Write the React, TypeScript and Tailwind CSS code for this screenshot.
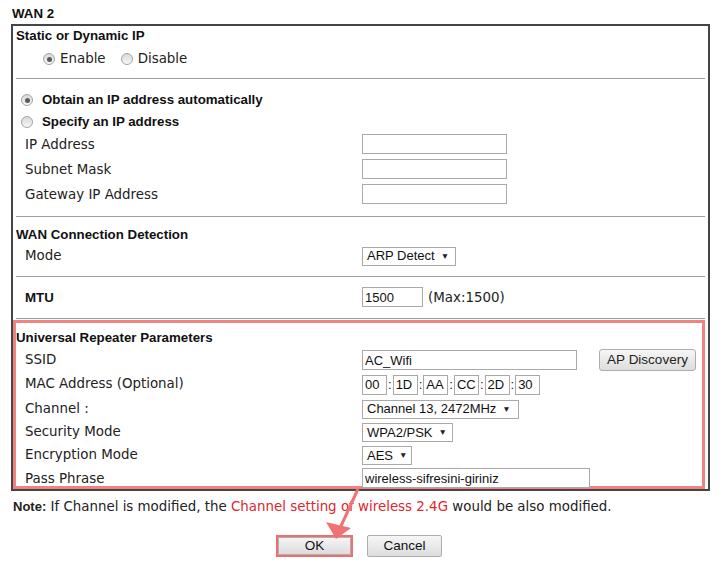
import React from 'react';

const LABEL = "font-['DejaVu_Sans',sans-serif] text-[13.4px] text-[#222]";
const HEAD = "font-['Liberation_Sans',Arial,sans-serif] font-bold text-[13.3px] text-[#111]";
const FIELD = "font-['Liberation_Sans',Arial,sans-serif] text-[13px] text-[#111]";

const Radio: React.FC<{ checked?: boolean }> = ({ checked }) => (
  <span className="inline-flex h-[12px] w-[12px] items-center justify-center rounded-full border border-[#a3a3a3] bg-gradient-to-b from-[#d8d8d8] to-[#f8f8f8]">
    {checked && <span className="h-[5px] w-[5px] rounded-full bg-[#5a5a5a]"></span>}
  </span>
);

const TextBox: React.FC<{ w: string; value?: string }> = ({ w, value }) => (
  <input
    readOnly
    value={value ?? ''}
    className={`${w} block h-[20px] border border-[#a9a9a9] bg-white px-[2px] outline-none ${FIELD}`}
  />
);

const Select: React.FC<{ w: string; value: string }> = ({ w, value }) => (
  <div className={`${w} flex h-[19px] items-center gap-[6px] border border-[#a9a9a9] bg-white pl-[4px] ${FIELD}`}>
    <span>{value}</span>
    <span className="text-[8.5px] text-[#222]">▼</span>
  </div>
);

const Sep = () => <div className="mx-[3px] h-px bg-[#a0a0a0]"></div>;

const Row: React.FC<{ h: string; pt?: string; label: React.ReactNode; children?: React.ReactNode }> = ({ h, pt = 'pt-[4px]', label, children }) => (
  <div className={`flex ${h} items-center`}>
    <div className={`w-[349px] pl-[12px] ${pt} ${LABEL}`}>{label}</div>
    <div className="flex items-center">{children}</div>
  </div>
);

const RepRow: React.FC<{ h: string; label: string; children?: React.ReactNode }> = ({ h, label, children }) => (
  <div className={`flex ${h} items-center`}>
    <div className={`w-[346px] shrink-0 pl-[9px] ${LABEL}`}>{label}</div>
    {children}
  </div>
);

const MacBox: React.FC<{ v: string }> = ({ v }) => (
  <input readOnly value={v} className={`block h-[20px] w-[25px] border border-[#a9a9a9] px-[2px] outline-none ${FIELD}`} />
);

const App: React.FC = () => {
  return (
    <div className="relative h-[565px] w-[723px] overflow-hidden bg-white">
      <div className={`h-[24px] pl-[12px] pt-[4px] ${HEAD}`}>WAN 2</div>

      <div className="ml-[11px] w-[699px] border-2 border-[#454545]">
        <div className={`flex h-[20px] items-center pl-[3px] ${HEAD}`}>Static or Dynamic IP</div>
        <div className={`flex h-[26px] items-center gap-[5px] pl-[30px] ${LABEL}`}>
          <Radio checked />
          <span className="mr-[10px]">Enable</span>
          <Radio />
          <span>Disable</span>
        </div>
        <div className="h-[6px]"></div>
        <Sep />

        <div className="h-[9px]"></div>
        <div className={`flex h-[24px] items-center gap-[9px] pl-[8px] ${HEAD}`}>
          <Radio checked />
          <span>Obtain an IP address automatically</span>
        </div>
        <div className={`flex h-[19px] items-center gap-[9px] pl-[8px] ${HEAD}`}>
          <Radio />
          <span>Specify an IP address</span>
        </div>
        <Row h="h-[25px]" label="IP Address"><TextBox w="w-[145px]" /></Row>
        <Row h="h-[25px]" label="Subnet Mask"><TextBox w="w-[145px]" /></Row>
        <Row h="h-[25px]" label="Gateway IP Address"><TextBox w="w-[145px]" /></Row>
        <div className="h-[10px]"></div>
        <Sep />

        <div className="h-[8px]"></div>
        <div className={`flex h-[20px] items-center pl-[3px] ${HEAD}`}>WAN Connection Detection</div>
        <Row h="h-[22px]" pt="pt-0" label="Mode"><Select w="w-[94px]" value="ARP Detect" /></Row>
        <div className="h-[9px]"></div>
        <Sep />

        <div className="h-[9px]"></div>
        <div className="flex h-[22px] items-center">
          <div className={`w-[349px] pl-[12px] pt-[2px] ${HEAD}`}>MTU</div>
          <TextBox w="w-[61px]" value="1500" />
          <span className={`ml-[5px] pt-[2px] ${LABEL}`}>(Max:1500)</span>
        </div>
        <div className="h-[10px]"></div>
        <Sep />

        <div className="mt-px w-[692px] border-[3px] border-[#f08282]">
          <div className="h-[5px]"></div>
          <div className={`flex h-[20px] items-center ${HEAD}`}>Universal Repeater Parameters</div>
          <RepRow h="h-[24px]" label="SSID">
            <TextBox w="w-[215px]" value="AC_Wifi" />
            <button className="ml-[22px] h-[22px] w-[97px] rounded-[3px] border border-[#adadad] bg-gradient-to-b from-[#f6f6f6] to-[#dddddd] font-['Liberation_Sans',Arial,sans-serif] text-[13.5px] text-[#222]">
              AP Discovery
            </button>
          </RepRow>
          <RepRow h="h-[25px]" label="MAC Address (Optional)">
            <div className={`flex items-center ${FIELD}`}>
              <MacBox v="00" />
              <span className="mx-[1px]">:</span>
              <MacBox v="1D" />
              <span className="mx-[1px]">:</span>
              <MacBox v="AA" />
              <span className="mx-[1px]">:</span>
              <MacBox v="CC" />
              <span className="mx-[1px]">:</span>
              <MacBox v="2D" />
              <span className="mx-[1px]">:</span>
              <MacBox v="30" />
            </div>
          </RepRow>
          <RepRow h="h-[24px]" label="Channel :">
            <Select w="w-[157px]" value="Channel 13, 2472MHz" />
          </RepRow>
          <RepRow h="h-[23px]" label="Security Mode">
            <Select w="w-[91px]" value="WPA2/PSK" />
          </RepRow>
          <RepRow h="h-[23px]" label="Encryption Mode">
            <Select w="w-[50px]" value="AES" />
          </RepRow>
          <div className="flex h-[19px] items-start">
            <div className={`flex h-[23px] w-[346px] shrink-0 items-center pl-[9px] pt-[2px] ${LABEL}`}>Pass Phrase</div>
            <div className="relative z-10 flex pt-px">
              <TextBox w="w-[228px]" value="wireless-sifresini-giriniz" />
            </div>
          </div>
        </div>
      </div>

      <div className="mt-[6px] pl-[13px] font-['DejaVu_Sans',sans-serif] text-[13.4px] text-[#222]">
        <span className="font-['Liberation_Sans',Arial,sans-serif] text-[13px] font-bold">Note:</span> If Channel is modified, the{' '}
        <span className="text-[#e0262f]">Channel setting of wireless 2.4G</span> would be also modified.
      </div>

      <div className="mt-[18px] flex justify-center gap-[14px] pr-[5px]">
        <div className="border-2 border-[#ef6f6f]">
          <button className="block h-[18px] w-[73px] border border-[#b0b0b0] bg-gradient-to-b from-[#f4f4f4] to-[#dcdcdc] font-['Liberation_Sans',Arial,sans-serif] text-[13.5px] leading-none text-[#111]">
            OK
          </button>
        </div>
        <button className="h-[22px] w-[75px] rounded-[2px] border border-[#adadad] bg-gradient-to-b from-[#f6f6f6] to-[#dddddd] font-['Liberation_Sans',Arial,sans-serif] text-[13.5px] text-[#111]">
          Cancel
        </button>
      </div>

      <svg className="pointer-events-none absolute left-0 top-0 z-20" width="723" height="565">
        <line x1="358" y1="489" x2="341" y2="526" stroke="#f07272" strokeWidth="3" />
        <polygon points="336,539 326,522 351,528" fill="#f07272" />
      </svg>
    </div>
  );
};

export default App;
